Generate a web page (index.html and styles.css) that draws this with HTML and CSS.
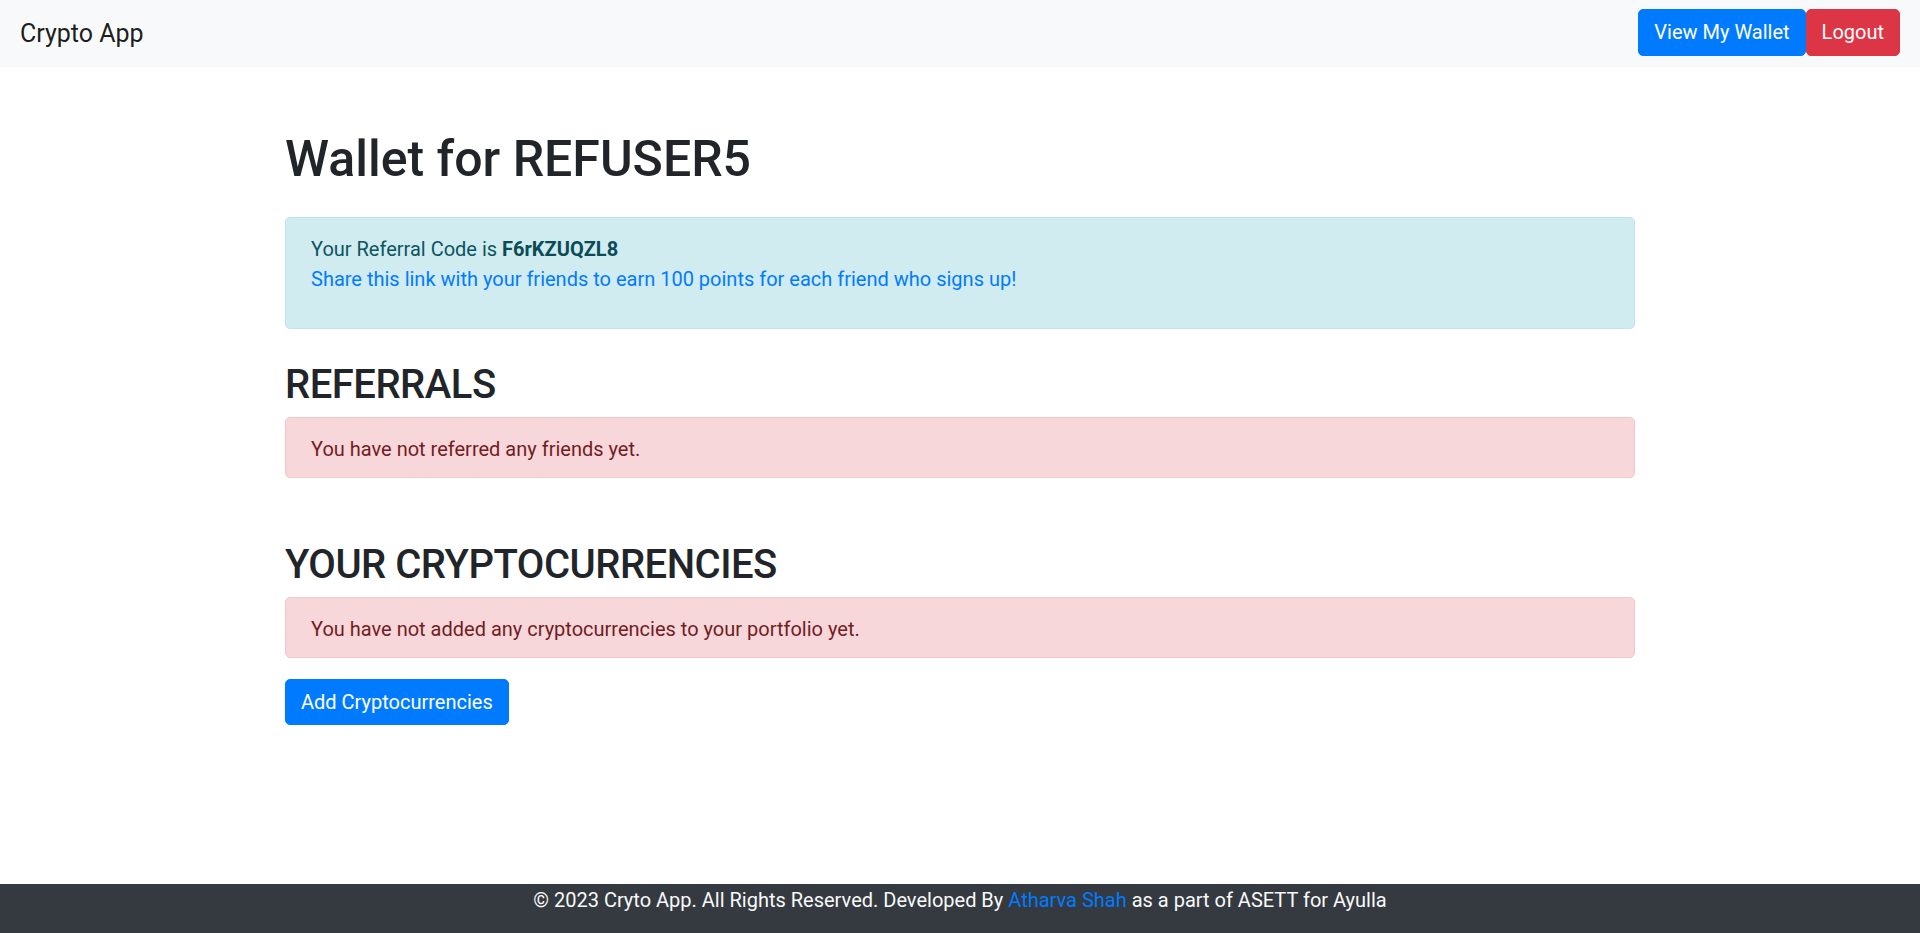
FILE: index.html
```html
<!DOCTYPE html>
<html lang="en">
<head>
<meta charset="utf-8">
<title>Crypto App</title>
<link rel="stylesheet" href="styles.css">
</head>
<body>
<nav class="navbar">
  <a class="brand" href="#">Crypto App</a>
  <div class="nav-actions">
    <a class="btn btn-primary" href="#">View My Wallet</a>
    <a class="btn btn-danger" href="#">Logout</a>
  </div>
</nav>
<main class="container">
  <h1 class="title">Wallet for REFUSER5</h1>
  <div class="alert alert-info">
    <div>Your Referral Code is <strong class="code">F6rKZUQZL8</strong></div>
    <div class="share">Share this link with your friends to earn 100 points for each friend who signs up!</div>
  </div>
  <h2 class="section section-first">REFERRALS</h2>
  <div class="alert alert-danger">You have not referred any friends yet.</div>
  <h2 class="section section-second">YOUR CRYPTOCURRENCIES</h2>
  <div class="alert alert-danger">You have not added any cryptocurrencies to your portfolio yet.</div>
  <div class="actions">
    <a class="btn btn-primary" href="#">Add Cryptocurrencies</a>
  </div>
</main>
<footer class="footer">
  <p>© 2023 Cryto App. All Rights Reserved. Developed By <a href="#">Atharva Shah</a> as a part of ASETT for Ayulla</p>
</footer>
</body>
</html>
```
FILE: styles.css
```css
* { box-sizing: border-box; }
html, body { margin: 0; padding: 0; }
body {
  font-family: Roboto, "Liberation Sans", sans-serif;
  font-size: 20px;
  line-height: 30px;
  color: #212529;
  background: #fff;
  min-height: 100vh;
  display: flex;
  flex-direction: column;
}
a { text-decoration: none; }

.navbar {
  height: 67px;
  padding: 0 20px;
  background: #f8f9fa;
  display: flex;
  align-items: center;
  justify-content: space-between;
}
.brand {
  font-size: 25px;
  line-height: 37.5px;
  color: rgba(0,0,0,0.9);
}
.nav-actions { display: flex; margin-top: -2px; }

.btn {
  display: inline-block;
  font-size: 20px;
  line-height: 30px;
  padding: 7px 15px;
  border: 1px solid transparent;
  border-radius: 5px;
  color: #fff;
  white-space: nowrap;
}
.btn-primary { background: #007bff; border-color: #007bff; }
.btn-danger { background: #dc3545; border-color: #dc3545; }
.nav-actions .btn { padding: 7px 15px 8px; }

.container {
  width: 1350px;
  margin: 0 auto;
}
.title {
  font-size: 50px;
  line-height: 60px;
  font-weight: 500;
  margin: 62px 0 28px;
}
.section {
  font-size: 40px;
  line-height: 48px;
  font-weight: 500;
  letter-spacing: -0.5px;
  margin: 0 0 8px;
}
.section-first { margin-top: 32px; }
.section-second { margin-top: 63px; }

.alert {
  border: 1px solid transparent;
  border-radius: 5px;
  padding: 16px 25px 13px;
}
.alert-info {
  background: #d1ecf1;
  border-color: #bee5eb;
  color: #0c5460;
  padding-bottom: 34px;
}
.alert-info .code { font-weight: 700; color: #0b4b55; }
.alert-info .share { color: #007bff; }
.alert-danger {
  background: #f8d7da;
  border-color: #f5c6cb;
  color: #721c24;
}
.actions { margin-top: 21px; }
.actions .btn { padding: 7px 15px 7px; }

.footer {
  margin-top: auto;
  background: #343a40;
  color: #f8f9fa;
  text-align: center;
  height: 49px;
  padding-top: 1px;
}
.footer p { margin: 0; }
.footer a { color: #007bff; }
```
